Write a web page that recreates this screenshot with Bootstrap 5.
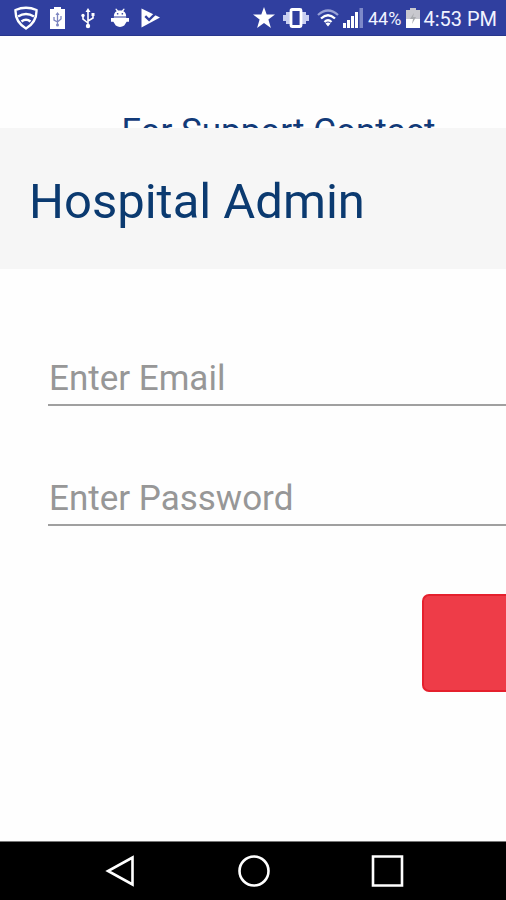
<!DOCTYPE html>
<html lang="en">
<head>
<meta charset="utf-8">
<meta name="viewport" content="width=device-width, initial-scale=1">
<title>Hospital Admin</title>
<link href="https://cdn.jsdelivr.net/npm/bootstrap@5.3.0/dist/css/bootstrap.min.css" rel="stylesheet">
<style>
body { font-family: Roboto, "Liberation Sans", sans-serif; background: #fefefe; }
.status-bar { background: #303f9f; height: 36px; color: #f1f3ff; padding: 0 9px 0 14px; border-bottom: 1px solid #28368c; }
.status-bar svg { display: block; flex: none; }
.battery-level { font-size: 18px; line-height: 36px; margin: 2px 5px 0; }
.clock { font-size: 20px; line-height: 36px; margin: 2px 0 0 3px; }
.support { height: 92px; padding-top: 72px; padding-left: 51px; font-size: 35px; line-height: 48px; color: #123a78; }
.panel-head { background: #f6f6f6; height: 141px; padding: 6px 29px 0; }
.panel-head h1 { font-size: 49px; line-height: 56px; font-weight: 400; color: #0b3a70; }
.sign-in { padding: 81px 0 57px 48px; }
.line-input { font-size: 35px; line-height: 44px; height: 56px; padding: 2px 0 0 1px; border: 0; border-bottom: 2px solid #a0a0a0; border-radius: 0; background: transparent; }
.line-input:focus { box-shadow: none; background: transparent; border-color: #303f9f; }
.line-input::placeholder { color: #979797; opacity: 1; }
.field-gap { margin-bottom: 64px; }
.submit { width: 84px; height: 98px; margin-top: 68px; background: #ee3c48; border: 2px solid #e5202d; border-right: 0; border-radius: 7px 0 0 7px; }
.submit:hover { background: #e22f3b; border-color: #d81e2b; }
.nav-keys { background: #000; height: 59px; border-top: 1px solid #777; padding: 0 101px 0 100px; }
.nav-keys svg { display: block; }
</style>
<script src="https://cdn.jsdelivr.net/npm/bootstrap@5.3.0/dist/js/bootstrap.bundle.min.js" defer></script>
</head>
<body class="d-flex flex-column min-vh-100">
<header class="status-bar d-flex align-items-center justify-content-between">
  <div class="d-flex align-items-center">
    <svg class="me-2" width="24" height="24" viewBox="0 0 24 24" fill="none" stroke="#fff" stroke-width="2.4"><path d="M1.500 4Q12-.5 22.500 4Q23 16 12 22.500Q1 16 1.500 4Z"/><path d="M4 10.500Q12 5.500 20 10.500M7.500 15.500Q12 12 16.500 15.500" stroke-width="2.600"/></svg>
    <svg class="ms-1 me-3" width="15" height="22" viewBox="0 0 15 22"><path d="M4 0h7v2h4v20H0V2h4z" fill="#fff"/><path d="M7.500 6v12M4 10v3l3.500 2 3.500-3V9" fill="none" stroke="#7d86c0" stroke-width="1.300"/><path d="m5.500 8 2-3 2 3z" fill="#7d86c0"/><circle cx="7.500" cy="18" r="1.500" fill="#7d86c0"/></svg>
    <svg class="me-3" width="14" height="22" viewBox="0 0 14 22" fill="none" stroke="#fff" stroke-width="1.600"><path d="M7 3v16M2 9v3l5 4M12 8v3l-5 3"/><path d="m4.500 5 2.500-4 2.500 4zM10.500 6h3v3h-3z" fill="#fff" stroke="none"/><circle cx="2" cy="8.500" r="1.700" fill="#fff" stroke="none"/><circle cx="7" cy="19" r="2.200" fill="#fff" stroke="none"/></svg>
    <svg class="me-2" width="18" height="20" viewBox="0 0 19 20"><path d="M3 8.500q0-4 3-5.500L4.500.5 5.500 0l2 2.200h4L13.500 0l1 .5L13 3q3 1.500 3 5.500zM3 9.500h13v.5h3v4h-2.500l-2.500 4q-4.500 3-9 0l-2.500-4H0v-4h3z" fill="#fff"/><circle cx="7" cy="5.500" r=".9" fill="#303f9f"/><circle cx="12" cy="5.500" r=".9" fill="#303f9f"/></svg>
    <svg class="ms-1" width="19" height="20" viewBox="0 0 20 20"><path d="M.5 0 20 9.500.5 20z" fill="#fff"/><path d="m4.500 8 4 4 8-8" fill="none" stroke="#303f9f" stroke-width="2.500"/></svg>
  </div>
  <div class="d-flex align-items-center">
    <svg class="me-2" width="22" height="21" viewBox="0 0 22 21"><path d="m11 0 2.700 7.500H22l-6.600 5 2.500 8.500-6.900-5-6.900 5 2.500-8.500L0 7.500h8.300z" fill="#fff"/></svg>
    <svg class="me-2" width="26" height="20" viewBox="0 0 26 20"><path d="M0 7h3v6H0zM3 4h4v12H3zM19 4h4v12h-4zM23 7h3v6h-3z" fill="#c9cff0"/><rect x="8" y="1.500" width="10" height="17" rx="1" fill="#303f9f" stroke="#fff" stroke-width="2.800"/></svg>
    <svg class="me-1" width="22" height="18" viewBox="0 0 22 18" fill="none" stroke="#fff" stroke-width="2.300"><path d="M1 6Q11-3 21 6" stroke="#98a1d6"/><path d="M4 9.500Q11 3 18 9.500M7.500 13Q11 9.500 14.500 13"/><path d="m8.500 14.500 2.500 3 2.500-3q-2.500-2-5 0z" fill="#fff" stroke="none"/></svg>
    <svg width="20" height="20" viewBox="0 0 20 20" fill="#fff"><path d="M0 15h3v5H0zM4 12h3v8H4zM8 8h3v12H8zM12 4h3v16h-3z"/><path d="M16.500 0H20v20h-3.500z" fill="#7e89c9"/></svg>
    <span class="battery-level">44%</span>
    <svg width="14" height="20" viewBox="0 0 14 20"><path d="M4 0h6v2h4v18H0V2h4z" fill="#c8c8ce"/><path d="M0 11h14v9H0z" fill="#fff"/><path d="m8 5-4 6h3l-1 5 4-7H7z" fill="#a8aaae"/></svg>
    <span class="clock">4:53 PM</span>
  </div>
</header>

<main class="flex-grow-1">
  <p class="support text-center text-nowrap overflow-hidden mb-0">For Support Contact</p>
  <section aria-labelledby="panel-title">
    <div class="panel-head d-flex align-items-center">
      <h1 id="panel-title" class="mb-0 text-nowrap">Hospital Admin</h1>
    </div>
    <form class="sign-in d-flex flex-column">
      <input type="email" class="form-control line-input field-gap" placeholder="Enter Email" aria-label="Enter Email">
      <input type="password" class="form-control line-input" placeholder="Enter Password" aria-label="Enter Password">
      <button type="button" class="btn submit ms-auto" aria-label="Log in"></button>
    </form>
  </section>
</main>

<nav class="nav-keys d-flex align-items-center justify-content-between" aria-label="System">
  <button type="button" class="btn p-0 border-0" aria-label="Back"><svg width="40" height="34" viewBox="0 0 40 34" fill="none" stroke="#fff" stroke-width="2.600"><path d="M32.500 3.500v27L8 17z"/></svg></button>
  <button type="button" class="btn p-0 border-0" aria-label="Home"><svg width="34" height="34" viewBox="0 0 34 34" fill="none" stroke="#fff" stroke-width="2.600"><circle cx="16" cy="17" r="14.500"/></svg></button>
  <button type="button" class="btn p-0 border-0" aria-label="Recent apps"><svg width="36" height="34" viewBox="0 0 36 34" fill="none" stroke="#fff" stroke-width="2.600"><path d="M4 2.500h29v29H4z"/></svg></button>
</nav>
</body>
</html>
